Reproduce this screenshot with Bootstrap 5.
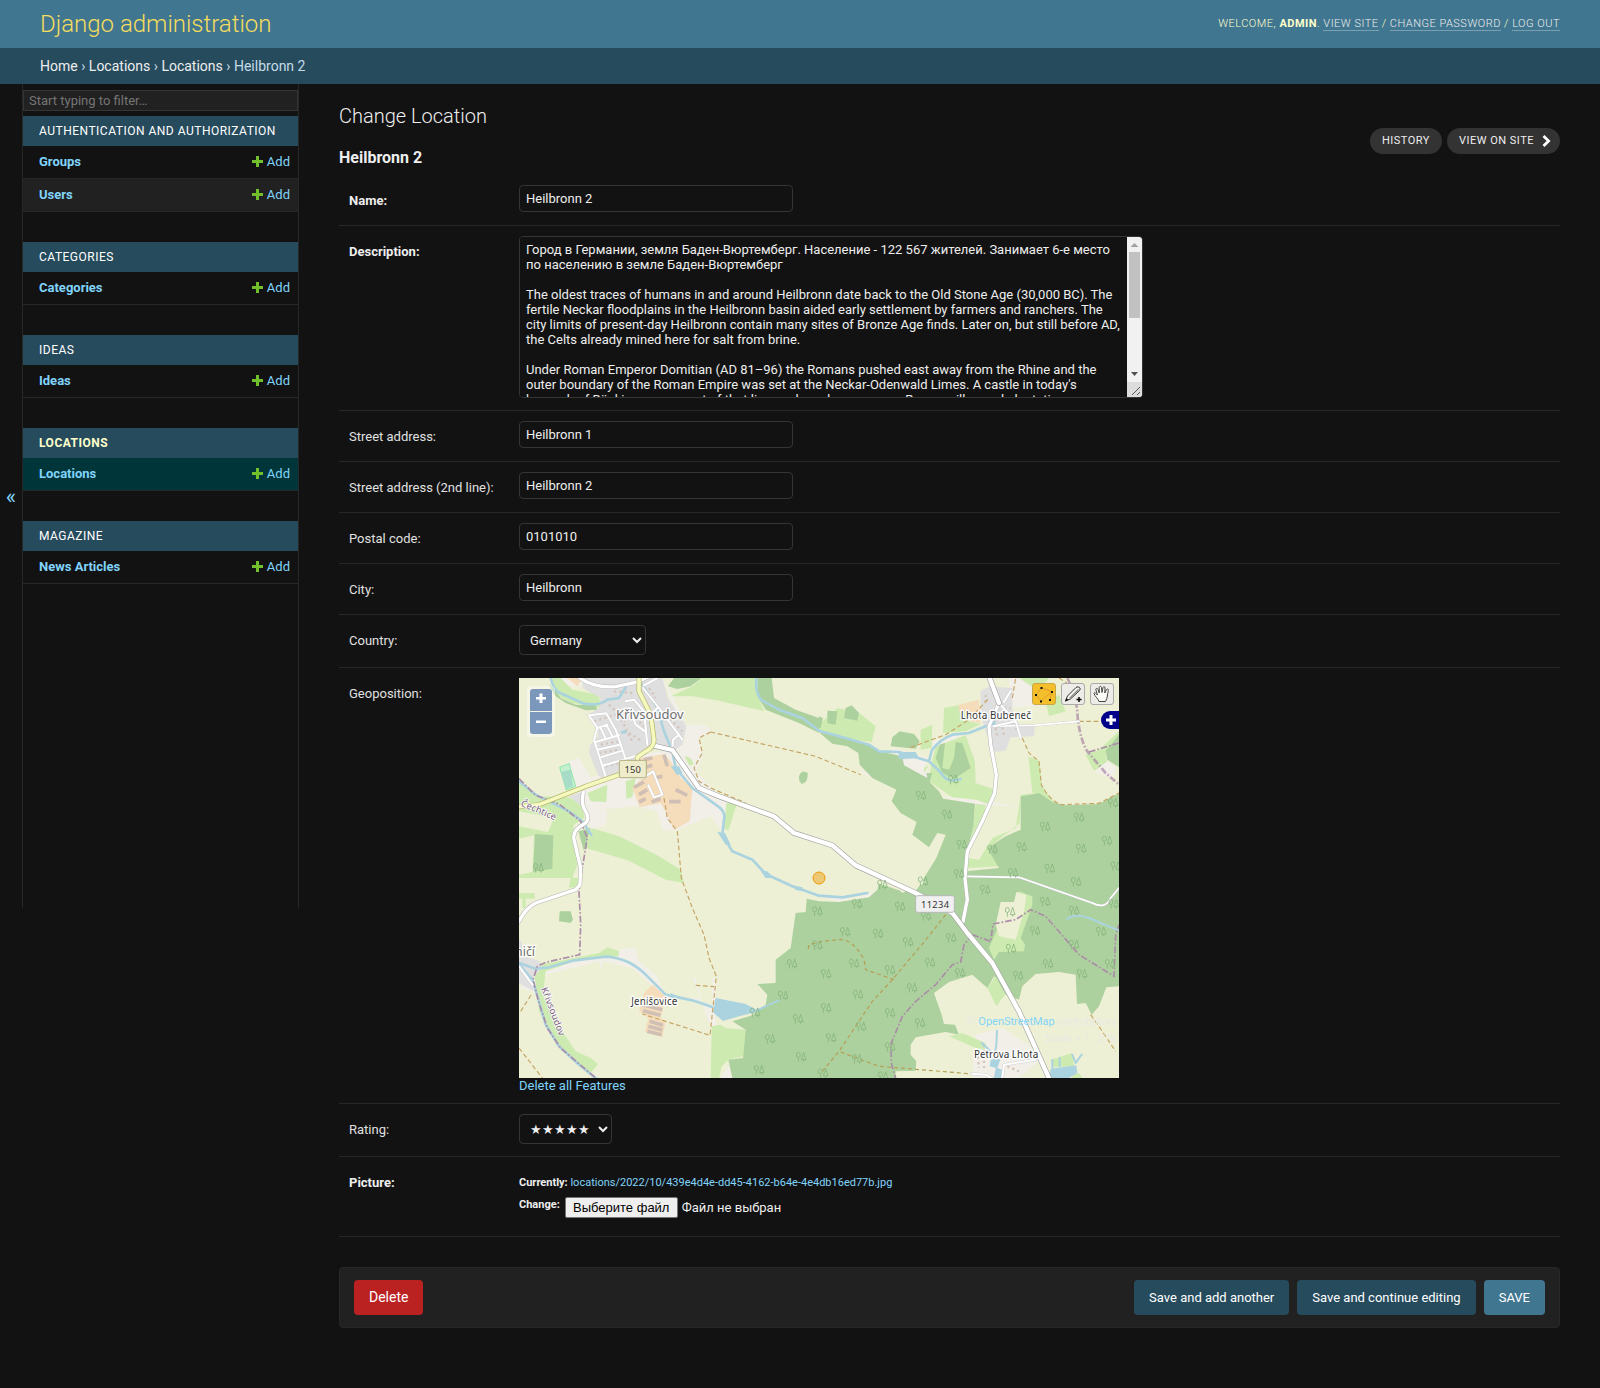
<!DOCTYPE html>
<html lang="en">
<head>
<meta charset="utf-8">
<meta name="viewport" content="width=device-width, initial-scale=1">
<title>Heilbronn 2 | Change Location | Django site admin</title>
<link href="https://cdn.jsdelivr.net/npm/bootstrap@5.3.0/dist/css/bootstrap.min.css" rel="stylesheet">
<style>
  body { font-family: Roboto, "Liberation Sans", sans-serif; font-size: 13px; line-height: 1.5; background: #121212; color: #eee; min-height: 1388px; }
  a { color: #81d4fa; text-decoration: none; }
  .site-head { height: 48px; padding: 0 40px; background: #417690; color: #ffc; }
  .site-name { font-size: 24px; font-weight: 300; color: #f5dd5d; line-height: 48px; }
  .user-tools { font-size: 11px; font-weight: 300; letter-spacing: .5px; line-height: 16px; }
  .user-tools strong { font-weight: 700; }
  .user-tools a { color: #eee; border-bottom: 1px solid rgba(255,255,255,.3); }
  .crumbs { height: 36px; padding: 0 40px; background: #264b5d; color: #c4dce8; font-size: 14px; line-height: 36px; }
  .crumbs a { color: #eee; }
  .fold-bar { width: 23px; border-right: 1px solid #272727; font-size: 22px; padding-top: 1px; }
  .side-wrap { height: 824px; }
  .side-nav { width: 276px; border-right: 1px solid #272727; padding-top: 6px; }
  .side-filter { height: 21px; border: 1px solid #353535; background: #212121; color: #eee; padding: 1px 5px; font-size: 13px; line-height: 17px; margin-bottom: 5px; outline: 0; }
  .side-filter::placeholder { color: #757575; }
  .app-group { margin-bottom: 30px; }
  .app-title { height: 30px; line-height: 30px; padding: 0 16px; margin: 0; font-size: 12px; font-weight: 400; letter-spacing: .5px; background: #264b5d; color: #fff; }
  .app-title.current { color: #ffc; font-weight: 700; }
  .model-line { height: 33px; border-bottom: 1px solid #272727; padding: 0 8px 0 16px; font-size: 13px; }
  .model-line.alt { background: #212121; }
  .model-line.current { background: #00363a; }
  .model-line svg { margin: -1px 4px 0 0; }
  .main-col { padding: 20px 40px 0; }
  h1 { font-size: 20px; font-weight: 300; line-height: 24px; margin: 0 0 20px; }
  h2 { font-size: 16px; font-weight: 700; line-height: 20px; margin: 0 0 7px; }
  .pill-tools { position: absolute; right: 40px; top: 44px; gap: 5px; }
  .pill { height: 26px; padding: 0 12px; line-height: 26px; border-radius: 15px; background: #333; color: #eee; font-size: 11px; letter-spacing: .5px; }
  .pill.go { padding-right: 9px; }
  .f-row { border-bottom: 1px solid #272727; padding: 10px 10px 12px; min-height: 51px; }
  .f-row > label, .f-row > .f-label { width: 170px; line-height: 20px; padding-top: 6px; color: #e0e0e0; }
  .f-row.req > label { font-weight: 700; color: #eee; }
  .f-row.pic { height: 80px; }
  .txt { width: 274px; height: 27px; border: 1px solid #353535; border-radius: 4px; padding: 0 6px; background: #121212; color: #eee; font-size: 13px; }
  .big { width: 624px; height: 162px; border: 1px solid #353535; border-radius: 4px; overflow: hidden; }
  .big textarea { width: 607px; height: 160px; border: 0; padding: 5px 0 0 6px; background: #121212; color: #eee; font-size: 13px; line-height: 15px; white-space: pre; overflow: hidden; resize: none; outline: 0; }
  .scroller { width: 15px; background: #f1f1f1; }
  .scroller .thumb { width: 11px; height: 66px; background: #c1c1c1; }
  .pick { height: 30px; border: 1px solid #353535; border-radius: 4px; padding: 4px 6px; background: #121212; color: #eee; font-size: 13px; }
  .pick.country { width: 127px; }
  .pick.stars { width: 93px; }
  .map-box { width: 600px; height: 400px; background: #eef0d5; }
  .map-box > svg { display: block; }
  .map-zoom { position: absolute; left: 8px; top: 8px; padding: 3px; background: rgba(255,255,255,.4); border-radius: 4px; }
  .map-zoom span { width: 22px; height: 22px; background: #7b98bc; color: #fff; }
  .map-zoom span:first-child { border-radius: 3px 3px 0 0; margin-bottom: 1px; }
  .map-zoom span:last-child { border-radius: 0 0 3px 3px; }
  .map-tools { position: absolute; right: 5px; top: 5px; gap: 5px; }
  .map-tools span { width: 24px; height: 22px; border: 1px solid #aaa; border-radius: 3px; background: #eeece8; }
  .map-tools span.on { background: #f3c02c; border-color: #c9a64a; }
  .map-layer { position: absolute; right: 0; top: 33px; width: 18px; height: 18px; background: #00008b; border-radius: 9px 0 0 9px; }
  .map-credit { position: absolute; right: 2px; top: 337px; font-size: 11px; line-height: 14px; color: #eae9e4; }
  .map-scale { position: absolute; right: 2px; top: 354px; font-size: 11px; line-height: 14px; color: #eae9e4; }
  .map-clear { line-height: 15px; margin-bottom: 2px; }
  .file-now { font-size: 11px; line-height: 16px; margin: 8px 0 6px; }
  .file-cap { font-size: 11px; }
  .file-none { padding-top: 1px; }
  .file-btn { width: 113px; height: 21px; border: 1px solid #767676; border-radius: 2px; background: #efefef; color: #000; padding: 0; margin: 0 4px 0 5px; font: 13px/18px "Liberation Sans", Arial, sans-serif; }
  .submit-bar { margin-top: 30px; height: 61px; border: 1px solid #272727; border-radius: 4px; background: #212121; padding: 0 14px; }
  .act { height: 35px; line-height: 35px; padding: 0 15px; border: 0; border-radius: 4px; color: #fff; font-size: 13px; background: #264b5d; }
  .act.save { background: #417690; }
  .act.del { background: #ba2121; font-size: 14px; }
</style>
<script src="https://cdn.jsdelivr.net/npm/bootstrap@5.3.0/dist/js/bootstrap.bundle.min.js"></script>
</head>
<body>
<svg width="0" height="0" class="position-absolute">
  <defs>
    <symbol id="plus" viewBox="0 0 11 11"><path d="M4 0h3v4h4v3H7v4H4V7H0V4h4z" fill="#70bf2b"/></symbol>
    <g id="tree" fill="none" stroke="#84b47b" stroke-width="2.4"><ellipse cx="-8" cy="-6" rx="6" ry="7.500"/><path d="M-8 2V14M8 8V14M8 -14L1 8H15Z"/></g>
  </defs>
</svg>
<header class="site-head d-flex justify-content-between align-items-center">
  <a class="site-name" href="#">Django administration</a>
  <div class="user-tools text-uppercase">Welcome, <strong>admin</strong>. <a href="#">View site</a> / <a href="#">Change password</a> / <a href="#">Log out</a></div>
</header>
<nav class="crumbs"><a href="#">Home</a> › <a href="#">Locations</a> › <a href="#">Locations</a> › Heilbronn 2</nav>

<div class="d-flex align-items-start">
  <div class="side-wrap d-flex flex-shrink-0">
    <a class="fold-bar d-flex align-items-center justify-content-center" href="#">«</a>
    <nav class="side-nav">
      <input class="side-filter d-block w-100" type="text" placeholder="Start typing to filter…">
      <section class="app-group">
        <h3 class="app-title text-uppercase">Authentication and Authorization</h3>
        <div class="model-line d-flex justify-content-between align-items-center"><a class="fw-bold" href="#">Groups</a><a class="d-flex align-items-center" href="#"><svg width="11" height="11"><use href="#plus"/></svg>Add</a></div>
        <div class="model-line alt d-flex justify-content-between align-items-center"><a class="fw-bold" href="#">Users</a><a class="d-flex align-items-center" href="#"><svg width="11" height="11"><use href="#plus"/></svg>Add</a></div>
      </section>
      <section class="app-group">
        <h3 class="app-title text-uppercase">Categories</h3>
        <div class="model-line d-flex justify-content-between align-items-center"><a class="fw-bold" href="#">Categories</a><a class="d-flex align-items-center" href="#"><svg width="11" height="11"><use href="#plus"/></svg>Add</a></div>
      </section>
      <section class="app-group">
        <h3 class="app-title text-uppercase">Ideas</h3>
        <div class="model-line d-flex justify-content-between align-items-center"><a class="fw-bold" href="#">Ideas</a><a class="d-flex align-items-center" href="#"><svg width="11" height="11"><use href="#plus"/></svg>Add</a></div>
      </section>
      <section class="app-group">
        <h3 class="app-title current text-uppercase">Locations</h3>
        <div class="model-line current d-flex justify-content-between align-items-center"><a class="fw-bold" href="#">Locations</a><a class="d-flex align-items-center" href="#"><svg width="11" height="11"><use href="#plus"/></svg>Add</a></div>
      </section>
      <section class="app-group">
        <h3 class="app-title text-uppercase">Magazine</h3>
        <div class="model-line d-flex justify-content-between align-items-center"><a class="fw-bold" href="#">News Articles</a><a class="d-flex align-items-center" href="#"><svg width="11" height="11"><use href="#plus"/></svg>Add</a></div>
      </section>
    </nav>
  </div>

  <main class="main-col flex-grow-1 position-relative">
    <h1>Change Location</h1>
    <div class="pill-tools d-flex text-uppercase">
      <a class="pill" href="#">History</a>
      <a class="pill go d-flex align-items-center" href="#">View on site<svg class="ms-2" width="9" height="12" viewBox="0 0 9 12"><path d="M1.500 1L6.600 6 1.500 11" fill="none" stroke="#fff" stroke-width="2.800"/></svg></a>
    </div>
    <h2>Heilbronn 2</h2>

    <div class="f-row req d-flex align-items-start"><label for="n">Name:</label><input class="txt" id="n" value="Heilbronn 2"></div>
    <div class="f-row req d-flex align-items-start"><label for="d">Description:</label>
      <div class="big d-flex">
<textarea id="d" spellcheck="false">Город в Германии, земля Баден-Вюртемберг. Население - 122 567 жителей. Занимает 6-е место
по населению в земле Баден-Вюртемберг

The oldest traces of humans in and around Heilbronn date back to the Old Stone Age (30,000 BC). The
fertile Neckar floodplains in the Heilbronn basin aided early settlement by farmers and ranchers. The
city limits of present-day Heilbronn contain many sites of Bronze Age finds. Later on, but still before AD,
the Celts already mined here for salt from brine.

Under Roman Emperor Domitian (AD 81–96) the Romans pushed east away from the Rhine and the
outer boundary of the Roman Empire was set at the Neckar-Odenwald Limes. A castle in today's
borough of Böckingen was part of that line, and nearby numerous Roman villas and plantations</textarea>
        <div class="scroller d-flex flex-column align-items-center">
          <svg width="15" height="15"><path d="M3.500 10L7.500 6l4 4z" fill="#a3a3a3"/></svg>
          <div class="thumb"></div>
          <svg class="mt-auto" width="15" height="30"><path d="M4 5h7L7.500 9z" fill="#505050"/><path d="M0 15h15v15H0z" fill="#dcdcdc"/><path d="M5 28L13 20M10 28l3-3" stroke="#555"/></svg>
        </div>
      </div>
    </div>
    <div class="f-row d-flex align-items-start"><label for="s1">Street address:</label><input class="txt" id="s1" value="Heilbronn 1"></div>
    <div class="f-row d-flex align-items-start"><label for="s2">Street address (2nd line):</label><input class="txt" id="s2" value="Heilbronn 2"></div>
    <div class="f-row d-flex align-items-start"><label for="pc">Postal code:</label><input class="txt" id="pc" value="0101010"></div>
    <div class="f-row d-flex align-items-start"><label for="ct">City:</label><input class="txt" id="ct" value="Heilbronn"></div>
    <div class="f-row d-flex align-items-start"><label for="co">Country:</label><select class="pick country" id="co"><option>Germany</option></select></div>
    <div class="f-row d-flex align-items-start pb-2"><span class="f-label">Geoposition:</span>
      <div>
        <div class="map-box position-relative overflow-hidden">
<svg width="600" height="400" viewBox="0 0 1800 1200" font-family="'Noto Sans', sans-serif">
  <rect width="1800" height="1200" fill="#eef0d5"/>
  <!-- bare ground -->
  <g fill="#f2efe9">
    <path d="M430 0L460 50 500 140 560 140 578 160 540 182 552 235 530 280 600 350 655 370 610 462 575 415 465 460 430 455 415 400 345 385 240 395 265 400 260 440 215 455 190 380 130 260 180 238 215 300 360 230 455 215 500 180Z"/>
    <path d="M95 0L195 0 185 28 120 20ZM1120 210L1230 240 1215 270 1240 300 1210 305 1150 265ZM1240 190L1330 165 1290 210 1240 220ZM1020 280L1080 285 1135 330 1080 310ZM1260 355L1370 365 1500 385 1370 380Z"/>
    <path d="M0 930L70 860 250 840 320 810 350 810 360 850 410 890 440 950 580 980 580 900 530 900 545 960 440 960 340 870 250 850 250 880 240 850 80 890 60 960 40 940ZM520 900H590V1060H650L640 1145 605 1200H640L627 1145 575 1045Z"/>
    <path d="M860 640L960 672 1050 660 1080 635 1000 665ZM1370 1070L1450 1050 1540 1110 1560 1150 1500 1200H1360ZM1720 280L1760 245 1790 270 1780 300ZM1470 0H1580V80L1480 90Z"/>
  </g>
  <!-- meadows -->
  <g fill="#cdebb0">
    <path d="M95 0L125 0 160 35 240 50 245 90 160 75 110 50ZM250 0H340L300 12H260ZM455 55L520 25 550 0H715L720 60 735 100 600 68 520 55Z"/>
    <path d="M0 312L60 355 150 358 190 382 196 420 165 440 160 480 175 560 160 600H0ZM205 345L265 320 262 372 215 370ZM320 310L350 300 340 358 322 362ZM497 235Q520 235 523 262L510 262ZM622 375L655 372 628 458 615 450Z"/>
    <path d="M218 450L300 475 420 535 485 575 495 615 440 605 330 548 200 510ZM155 600H185L180 625 150 630ZM0 645H47V662H20V690H10V662H0Z"/>
    <path d="M45 880L75 858 240 825 265 808 300 820 298 835 180 845 80 880 72 950 130 1060 170 1120 215 1140 237 1158 210 1190 110 1090 60 1000ZM578 1045L605 1040 620 1050 680 1055 673 1135 628 1145 608 1165 600 1200H575Z"/>
    <path d="M900 140L955 90 1020 105 1070 145 1058 192 1000 185 900 160ZM1275 90L1325 80 1350 130 1385 138 1340 160 1272 165ZM1205 155L1240 140 1238 210 1205 215ZM1235 270L1250 205 1340 172 1368 250 1370 315 1428 335 1415 382 1372 365 1300 358 1230 310ZM1215 270L1230 260 1215 285Z"/>
    <path d="M1370 378L1400 380 1390 440 1350 510 1362 445ZM1528 235L1562 250 1568 320 1605 375 1545 345 1505 355 1502 435 1420 500 1440 565 1345 570 1348 540 1380 545 1420 480 1490 450 1505 350 1540 345ZM1700 230L1740 215 1800 160V200L1760 230 1765 250 1725 280ZM1580 70L1620 50 1640 100 1590 115ZM1500 0H1590L1560 40Z"/>
  </g>
  <!-- woodland -->
  <g fill="#add19e">
    <path d="M90 20L110 55 140 75 200 97 235 95 230 82 170 80 125 60 105 30ZM447 25L465 0H548L515 25 475 33ZM715 0H758L765 60 830 95 900 120V165L840 135 740 95 718 60Z"/>
    <path d="M48 468L103 472 100 572 42 582ZM178 460L215 450 195 520ZM122 700L155 700 162 725 155 735 120 730ZM840 295Q848 272 866 285 868 315 848 318 838 310 840 295ZM925 98L955 100 950 140 925 136ZM980 90L998 82 1020 105 1015 128 975 120ZM900 115L912 120 905 150 900 150Z"/>
    <path d="M1115 205L1120 178 1142 160 1185 168 1202 190 1190 212ZM1250 240L1262 200 1278 195 1270 270 1290 275 1305 240 1310 192 1330 195 1355 270 1305 303 1270 285ZM1760 218L1800 170V268L1765 245Z"/>
    <path d="M900 163L940 172 1050 200 1080 220 1150 235 1155 262 1225 300 1222 285 1240 285 1232 312 1260 340 1272 362 1368 377 1363 445 1345 520 1342 580 1440 570 1405 510 1460 475 1505 455 1505 355 1560 345 1600 372 1640 382 1740 378 1800 345V925L1762 928 1740 985 1718 1010 1700 975 1674 978 1670 890 1620 882 1550 888 1510 925 1500 965 1460 950 1425 895 1405 930 1360 890 1290 912 1245 945 1268 1010 1275 1038 1308 1040 1320 1070 1280 1062 1190 1078 1175 1100 1175 1130 1192 1150 1190 1178 1130 1180V1200H640L628 1145 672 1140 680 1055 640 1030 700 1012 740 980 745 950 715 918 770 915 770 845 815 810 830 705 860 702 863 662 900 670 960 672 1050 658 1075 635 1082 610 1110 605 1190 640 1215 600 1252 540 1280 470 1255 465 1230 508 1180 470 1193 432 1145 405 1118 370 1132 335 1060 300 1022 260 1018 225 985 205 940 197Z"/>
  </g>
  <path d="M1410 810L1440 740 1480 700 1500 640 1540 655 1540 680 1505 780 1518 800 1515 820 1440 822 1425 845ZM1430 895L1458 950 1432 985 1405 930ZM1290 1075L1330 1065 1400 1095 1398 1115 1370 1110ZM1595 1145L1660 1125 1665 1165 1605 1168ZM1660 1190L1680 1185 1690 1200H1660Z" fill="#cdebb0"/>
  <path d="M1445 672L1485 672 1492 642 1522 652 1515 700 1490 785 1440 775 1430 740ZM1060 585L1110 575 1205 600 1185 622 1155 642 1075 615ZM1130 625L1200 600 1180 630 1150 645ZM1230 1178L1240 1200H1190Z" fill="#eef0d5"/>
  <path d="M1135 625L1175 640 1220 612 1200 605ZM0 400L105 420 87 462 0 445ZM0 482L45 472 40 582 0 590Z" fill="#eef0d5"/>
  <!-- built-up land -->
  <g fill="#e0dfdf">
    <path d="M195 0H430L447 60 502 145 490 200 455 225 410 212 360 232 350 260 250 302 238 292 210 225 213 200 240 172 208 110 240 90 245 60 190 30ZM150 355L195 340 185 382Z"/>
    <path d="M1385 40L1410 25 1480 30 1480 95 1500 140 1548 145 1545 175 1475 178 1460 218 1425 222 1400 160 1385 110ZM0 780L10 800 15 835 65 850 60 880 40 900 42 940 0 915Z"/>
  </g>
  <path d="M360 242L435 228 455 250 485 300 520 330 512 430 465 455 440 400 425 375 362 388 340 330 380 290ZM1320 80L1380 65 1385 135 1355 130 1345 105 1320 100ZM400 920L440 955 425 1020 440 1030 430 1077 378 1062 388 1020 360 1000 375 945ZM145 0H190L175 25Z" fill="#f5dcba"/>
  <path d="M345 328L375 312M360 350L385 335M360 372L380 362M398 372L425 362M470 335L505 352M450 371H485M435 230L445 265M380 268L400 262M405 300L430 295M370 980L430 995M372 998L425 1012M392 1030L432 1042M388 1045L430 1056M385 1060L428 1070M375 245L400 240" stroke="#cfbfb5" stroke-width="11"/>
  <path d="M285 40L340 45M270 80L320 130M300 110L340 190M245 200L300 190M240 225L300 215M260 265L300 255M330 165L370 190M390 30L410 60M430 100L490 160M350 120L375 145M225 130L290 110M1400 50V75M1455 90H1475M1430 150L1435 175M1450 148L1455 170M1490 150L1500 165M1375 1120L1380 1170M1395 1100V1170M1465 1165L1500 1180" stroke="#d4c6be" stroke-width="7" stroke-dasharray="7 9"/>
  <path d="M122 268L150 256 170 325 142 336Z" fill="#c4f0cf" stroke="#8ce8a5" stroke-width="3"/><path d="M125 282L155 275 162 325 140 332Z" fill="#a6dcc8"/>
  <!-- water -->
  <path fill="#aad3df" d="M590 960L680 978 722 1000 660 1015 612 1029 582 1003ZM595 462L618 465 635 500 620 500ZM1138 222L1190 222 1200 240 1140 244ZM455 265H480L490 285 475 292ZM305 160L320 155 325 165 308 168ZM455 945L490 960 455 962ZM725 580L745 580 765 600 740 600ZM820 622L850 628 850 640 830 636ZM1415 1145L1445 1142 1435 1170 1450 1175V1200H1425L1430 1170 1412 1165ZM1595 1172L1672 1162 1675 1185 1650 1200H1590ZM1408 130L1430 128V145H1410Z"/>
  <g fill="none" stroke="#aad3df" stroke-linejoin="round" stroke-linecap="round">
    <path stroke-width="8" d="M95 0Q105 42 130 48L195 77Q240 85 265 65L300 60 320 28M370 20L415 90 435 160 460 220 470 270 520 330 590 380Q622 400 615 425L610 470 640 520 700 545 740 588 820 625 900 653 970 658 1045 645M0 310L50 350 150 400 190 430 217 470M712 0Q708 50 730 68L780 95 850 120 900 158 960 175 1050 200 1080 220 1140 222 1190 238 1230 250 1260 278Q1280 308 1300 308L1325 303M1230 250L1238 218Q1260 185 1300 170L1350 165 1400 145M0 855L50 872 90 868 160 848 260 836Q330 840 380 890L440 950 520 967 580 987M0 858L40 905 60 970 80 1040 120 1105 180 1160 230 1200"/>
    <path stroke-width="6" d="M700 1003L780 967M1645 722Q1670 705 1710 720L1800 758M1434 1058L1432 1100 1425 1145M1388 1095L1415 1120M1600 1145V1170M1622 1140V1165M1660 1130L1670 1155 1688 1130"/>
  </g>
  <!-- tracks and borders -->
  <g fill="none" stroke="#c4a464" stroke-width="3.500" stroke-dasharray="14 8">
    <path d="M575 162L890 235 1025 290M575 162L540 180 550 225 525 270 540 310 575 330 680 375M435 360L445 420 475 460 487 600 520 690 555 770 570 840 592 895 585 960 573 1072 370 1008M1175 208L1280 170 1350 125 1410 60M1510 180L1530 225 1560 250 1567 320Q1590 365 1625 380L1740 376 1800 345M1680 130H1760M0 1110L70 1200M5 1000L40 945M530 922L585 926M1715 1010L1750 1060 1790 1120M1480 60L1490 0M1620 0L1680 40"/>
    <path stroke="#b59e54" stroke-dasharray="12 9" d="M1280 710L1225 780 1120 905 1060 970 960 1120 910 1180M1125 905L1040 875 1035 845Q1000 780 960 785L910 790 870 800 866 820M965 1122L1080 1165 1350 1187"/>
  </g>
  <g fill="none" stroke="#ab8da8" stroke-width="5" stroke-dasharray="20 6 5 6">
    <path d="M0 302L50 352 120 378 185 430 205 480 190 570 180 640 185 740 182 830 80 853 55 865 42 905 60 975 85 1050 125 1110 230 1200M1360 770L1335 800 1325 852 1300 860 1250 920 1190 970 1150 1015 1115 1100 1118 1160 1130 1200M1360 770L1415 790 1422 738 1490 725 1535 695 1580 715 1680 830 1785 895 1790 770 1800 740"/>
    <path stroke-width="8" stroke-opacity=".75" d="M1645 0Q1675 60 1676 120 1685 190 1705 220L1760 285 1800 320"/><path d="M1710 222L1800 195"/>
  </g>
  <!-- streets -->
  <g fill="none" stroke-linejoin="round" stroke-linecap="round">
    <path stroke="#c4c4c4" stroke-width="7" d="M1410 145L1545 142 1680 130M1340 595L1500 598 1720 675Q1760 695 1775 660L1800 630"/>
    <path stroke="#fff" stroke-width="5" d="M1410 145L1545 142 1680 130M1340 595L1500 598 1720 675Q1760 695 1775 660L1800 630"/>
    <path stroke="#cfcfcf" stroke-width="9" d="M210 112L262 106 290 155 318 238M210 112L235 150 225 185 260 295M235 150L265 140M245 150L260 182M262 140L280 175M230 192L300 172M235 215L302 200M245 238L310 218M255 262L380 225M372 30L420 90 490 185M415 90L395 110M375 22L415 0M460 215L462 185 480 170M320 70L345 65 375 100 385 200M330 90L350 140 378 160M1475 38L1455 72M1440 75L1490 130 1505 180M372 300L402 280 430 350 405 358 388 322M1425 145L1490 130M0 865L40 920M1360 1187L1400 1190 1425 1205M1450 1200L1455 1160 1550 1145"/>
    <path stroke="#fff" stroke-width="6" d="M210 112L262 106 290 155 318 238M210 112L235 150 225 185 260 295M235 150L265 140M245 150L260 182M262 140L280 175M230 192L300 172M235 215L302 200M245 238L310 218M255 262L380 225M372 30L420 90 490 185M415 90L395 110M375 22L415 0M460 215L462 185 480 170M320 70L345 65 375 100 385 200M330 90L350 140 378 160M1475 38L1455 72M1440 75L1490 130 1505 180M372 300L402 280 430 350 405 358 388 322M1425 145L1490 130M0 865L40 920M1360 1187L1400 1190 1425 1205M1450 1200L1455 1160 1550 1145"/>
    <path stroke="#b5b5b5" stroke-width="13" d="M175 -5Q225 32 290 26L355 12 390 -5M193 342Q185 380 200 400 215 425 195 438 160 455 165 485L185 570 183 620 170 635 50 675Q20 690 0 730M1440 75L1425 110 1410 145 1415 200 1432 290 1427 345 1390 430 1345 520 1338 600 1345 665 1332 730"/>
    <path stroke="#fff" stroke-width="10" d="M175 -5Q225 32 290 26L355 12 390 -5M193 342Q185 380 200 400 215 425 195 438 160 455 165 485L185 570 183 620 170 635 50 675Q20 690 0 730M1440 75L1425 110 1410 145 1415 200 1432 290 1427 345 1390 430 1345 520 1338 600 1345 665 1332 730"/>
    <path stroke="#a5a5a5" stroke-width="17" d="M405 203L460 216 540 330 600 355 765 415 825 465 940 502 1010 562 1190 645 1300 705 1345 765 1420 855 1500 1000 1592 1205M1410 -5L1440 75"/>
    <path stroke="#fff" stroke-width="13" d="M405 203L460 216 540 330 600 355 765 415 825 465 940 502 1010 562 1190 645 1300 705 1345 765 1420 855 1500 1000 1592 1205M1410 -5L1440 75"/>
    <path stroke="#b5b66f" stroke-width="15" d="M360 -5V40L395 110 405 185Q405 208 380 220L355 238V270L300 290 200 325 60 380 0 386"/>
    <path stroke="#f6f9be" stroke-width="11" d="M360 -5V40L395 110 405 185Q405 208 380 220L355 238V270L300 290 200 325 60 380 0 386"/>
  </g>
  <g>
    <use href="#tree" x="58" y="570"/><use href="#tree" x="1206" y="353"/><use href="#tree" x="1284" y="410"/><use href="#tree" x="1328" y="500"/><use href="#tree" x="1303" y="305"/><use href="#tree" x="1578" y="446"/><use href="#tree" x="1680" y="418"/><use href="#tree" x="1782" y="375"/><use href="#tree" x="1420" y="514"/><use href="#tree" x="1508" y="507"/><use href="#tree" x="1686" y="512"/><use href="#tree" x="1764" y="488"/><use href="#tree" x="1592" y="572"/><use href="#tree" x="1482" y="585"/><use href="#tree" x="1790" y="565"/><use href="#tree" x="1320" y="588"/>
    <use href="#tree" x="1090" y="620"/><use href="#tree" x="1212" y="610"/><use href="#tree" x="1014" y="678"/><use href="#tree" x="1143" y="686"/><use href="#tree" x="1221" y="714"/><use href="#tree" x="1398" y="635"/><use href="#tree" x="1671" y="612"/><use href="#tree" x="1578" y="671"/><use href="#tree" x="1784" y="678"/><use href="#tree" x="1473" y="702"/><use href="#tree" x="1665" y="698"/><use href="#tree" x="895" y="700"/><use href="#tree" x="978" y="762"/><use href="#tree" x="1077" y="767"/><use href="#tree" x="1167" y="792"/><use href="#tree" x="1296" y="780"/><use href="#tree" x="1548" y="758"/><use href="#tree" x="1746" y="761"/><use href="#tree" x="1476" y="812"/><use href="#tree" x="1665" y="800"/><use href="#tree" x="895" y="802"/><use href="#tree" x="819" y="858"/><use href="#tree" x="1005" y="857"/><use href="#tree" x="1113" y="876"/><use href="#tree" x="1233" y="854"/><use href="#tree" x="1587" y="858"/><use href="#tree" x="1773" y="858"/><use href="#tree" x="921" y="888"/><use href="#tree" x="1323" y="885"/><use href="#tree" x="1497" y="893"/><use href="#tree" x="1689" y="888"/><use href="#tree" x="1179" y="930"/><use href="#tree" x="792" y="953"/><use href="#tree" x="1017" y="950"/><use href="#tree" x="921" y="990"/><use href="#tree" x="708" y="1004"/><use href="#tree" x="1113" y="1005"/><use href="#tree" x="837" y="1023"/><use href="#tree" x="1203" y="1035"/><use href="#tree" x="1026" y="1046"/><use href="#tree" x="753" y="1083"/><use href="#tree" x="936" y="1080"/><use href="#tree" x="1113" y="1107"/><use href="#tree" x="846" y="1137"/><use href="#tree" x="1014" y="1143"/><use href="#tree" x="720" y="1176"/><use href="#tree" x="912" y="1186"/><use href="#tree" x="1092" y="1195"/>
  </g>
  <!-- labels -->
  <g paint-order="stroke" stroke="#fff" stroke-opacity=".85" stroke-linejoin="round" stroke-width="9" fill="#333">
    <text x="291" y="122" font-size="39" fill="#6f6f6f" textLength="203" lengthAdjust="spacingAndGlyphs">Křivsoudov</text>
    <text x="48" y="835" font-size="37" fill="#6f6f6f" text-anchor="end">ničí</text>
    <text x="1325" y="124" font-size="30" textLength="211">Lhota Bubeneč</text>
    <text x="337" y="981" font-size="30" textLength="138">Jenišovice</text>
    <text x="1365" y="1139" font-size="30" textLength="193">Petrova Lhota</text>
    <text font-size="28" fill="#7d5a86" stroke-width="5" transform="translate(4 383) rotate(23)" textLength="112">Čechtice</text>
    <text font-size="28" fill="#7d5a86" stroke-width="5" transform="translate(66 932) rotate(69)" textLength="153">Křivsoudov</text>
  </g>
  <g stroke-width="3" font-size="28" text-anchor="middle">
    <rect x="301" y="247" width="81" height="52" rx="5" fill="#eeeccb" stroke="#b0ae7e"/><text x="341" y="284" fill="#333" textLength="49">150</text>
    <rect x="1190" y="653" width="116" height="50" rx="6" fill="#f0f0f0" stroke="#b8b8b8"/><text x="1248" y="689" fill="#333" textLength="84">11234</text>
  </g>
  <circle cx="900" cy="600" r="18" fill="#ee9900" fill-opacity=".45" stroke="#ee9900" stroke-width="3"/>
</svg>
          <div class="map-zoom d-flex flex-column">
            <span><svg class="d-block" width="22" height="22"><path d="M9.500 4.500h3v3.500h3.500v2.500h-3.500V14h-3v-3.500H6V8h3.500z" fill="#fff"/></svg></span>
            <span><svg class="d-block" width="22" height="22"><path d="M6 8.500h10V11H6z" fill="#fff"/></svg></span>
          </div>
          <div class="map-tools d-flex">
            <span class="on"><svg class="d-block" width="22" height="20"><path d="M3 11L8.500 4 19 7.500 17 15M19 7.500L8 17 3 11" fill="none" stroke="#e39a2c"/><path d="M2 10h2v2H2zM7.500 3h2v2h-2zM18 7h2v2h-2zM16 15h2v2h-2zM7 16.500h2v2H7z" fill="#111"/></svg></span>
            <span><svg class="d-block" width="22" height="20"><path d="M3.500 17L5.500 12 14 3.500Q16 2 17.500 3.500T17.500 6.500L8.500 15Z" fill="#f5f5f0" stroke="#333"/><path d="M7.500 14.500L16.500 5.500" stroke="#888" stroke-width="1.500"/><path d="M3 17.500l1.500-3.500 2 2z" fill="#111"/><path d="M17 13v5M14.500 15.500h5" stroke="#000" stroke-width="1.500"/></svg></span>
            <span><svg class="d-block" width="22" height="20"><path d="M8 17.500C7.500 15 3.500 12 3 9.500 3.200 8.300 4.500 8.500 6.500 11L4.800 5.500C5 4 6.500 4 7 5.500L8.300 9 8.200 3.500C8.500 2 10.200 2 10.500 3.500L11 8.500 12 3.500C12.500 2.200 14 2.600 14 4L13.800 9 15.600 5.500C16.500 4.500 17.800 5.300 17.300 6.700 16 11 17 13 14.500 17.500Z" fill="#fdfdf8" stroke="#444"/></svg></span>
          </div>
          <div class="map-layer"><svg class="d-block" width="18" height="18"><path d="M8.500 4h3v3.500H15v3h-3.500V14h-3v-3.500H5v-3h3.500z" fill="#fff"/></svg></div>
          <div class="map-credit">© <a href="#">OpenStreetMap</a> contributors</div>
          <div class="map-scale">Scale = 1 : 27K</div>
        </div>
        <a class="map-clear d-block" href="#">Delete all Features</a>
      </div>
    </div>
    <div class="f-row d-flex align-items-start"><label for="ra">Rating:</label><select class="pick stars" id="ra"><option>★★★★★</option></select></div>
    <div class="f-row req pic d-flex align-items-start"><label>Picture:</label>
      <div>
        <div class="file-now"><b>Currently:</b> <a href="#">locations/2022/10/439e4d4e-dd45-4162-b64e-4e4db16ed77b.jpg</a></div>
        <div class="d-flex align-items-start"><b class="file-cap">Change:</b><button class="file-btn">Выберите файл</button><span class="file-none">Файл не выбран</span></div>
      </div>
    </div>
    <div class="submit-bar d-flex align-items-center gap-2">
      <button class="act del me-auto">Delete</button>
      <button class="act">Save and add another</button>
      <button class="act">Save and continue editing</button>
      <button class="act save">SAVE</button>
    </div>
  </main>
</div>
</body>
</html>
